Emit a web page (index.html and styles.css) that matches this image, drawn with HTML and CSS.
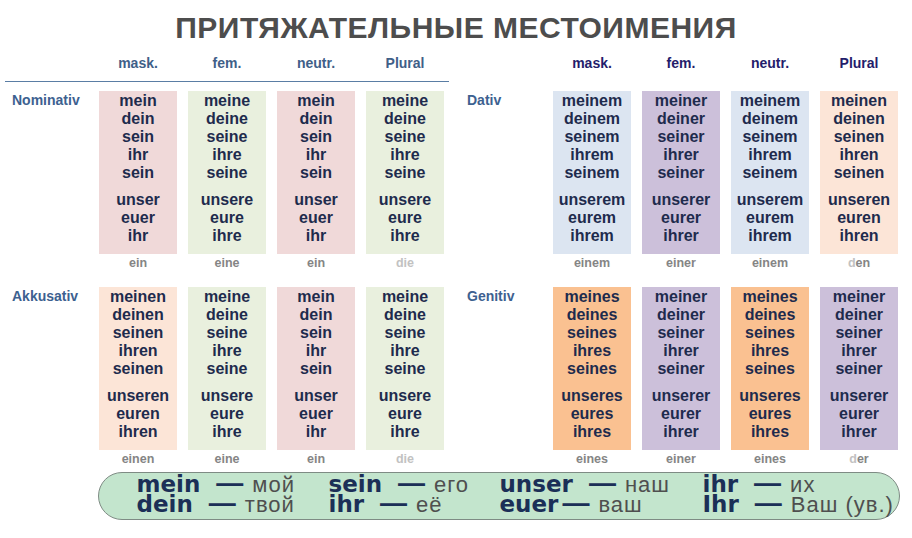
FILE: index.html
```html
<!DOCTYPE html>
<html lang="de">
<head>
<meta charset="utf-8">
<title>Притяжательные местоимения</title>
<link rel="stylesheet" href="styles.css">
</head>
<body>
<h1 class="title">ПРИТЯЖАТЕЛЬНЫЕ МЕСТОИМЕНИЯ</h1>
<div class="tables">
  <section class="panel panel-left">
    <div class="grid head"><span></span><span>mask.</span><span>fem.</span><span>neutr.</span><span>Plural</span></div>
    <div class="grid row">
      <div class="label">Nominativ</div>
      <div class="cell pink"><p>mein<br>dein<br>sein<br>ihr<br>sein</p><p>unser<br>euer<br>ihr</p></div>
      <div class="cell green"><p>meine<br>deine<br>seine<br>ihre<br>seine</p><p>unsere<br>eure<br>ihre</p></div>
      <div class="cell pink"><p>mein<br>dein<br>sein<br>ihr<br>sein</p><p>unser<br>euer<br>ihr</p></div>
      <div class="cell green"><p>meine<br>deine<br>seine<br>ihre<br>seine</p><p>unsere<br>eure<br>ihre</p></div>
    </div>
    <div class="grid arts"><span></span><span>ein</span><span>eine</span><span>ein</span><span class="lt">die</span></div>
    <div class="grid row row2">
      <div class="label">Akkusativ</div>
      <div class="cell peach"><p>meinen<br>deinen<br>seinen<br>ihren<br>seinen</p><p>unseren<br>euren<br>ihren</p></div>
      <div class="cell green"><p>meine<br>deine<br>seine<br>ihre<br>seine</p><p>unsere<br>eure<br>ihre</p></div>
      <div class="cell pink"><p>mein<br>dein<br>sein<br>ihr<br>sein</p><p>unser<br>euer<br>ihr</p></div>
      <div class="cell green"><p>meine<br>deine<br>seine<br>ihre<br>seine</p><p>unsere<br>eure<br>ihre</p></div>
    </div>
    <div class="grid arts"><span></span><span>einen</span><span>eine</span><span>ein</span><span class="lt">die</span></div>
  </section>
  <section class="panel panel-right">
    <div class="grid head"><span></span><span>mask.</span><span>fem.</span><span>neutr.</span><span>Plural</span></div>
    <div class="grid row">
      <div class="label">Dativ</div>
      <div class="cell blue"><p>meinem<br>deinem<br>seinem<br>ihrem<br>seinem</p><p>unserem<br>eurem<br>ihrem</p></div>
      <div class="cell lilac"><p>meiner<br>deiner<br>seiner<br>ihrer<br>seiner</p><p>unserer<br>eurer<br>ihrer</p></div>
      <div class="cell blue"><p>meinem<br>deinem<br>seinem<br>ihrem<br>seinem</p><p>unserem<br>eurem<br>ihrem</p></div>
      <div class="cell peach"><p>meinen<br>deinen<br>seinen<br>ihren<br>seinen</p><p>unseren<br>euren<br>ihren</p></div>
    </div>
    <div class="grid arts"><span></span><span>einem</span><span>einer</span><span>einem</span><span><span class="lt">d</span>en</span></div>
    <div class="grid row row2">
      <div class="label">Genitiv</div>
      <div class="cell orange"><p>meines<br>deines<br>seines<br>ihres<br>seines</p><p>unseres<br>eures<br>ihres</p></div>
      <div class="cell lilac"><p>meiner<br>deiner<br>seiner<br>ihrer<br>seiner</p><p>unserer<br>eurer<br>ihrer</p></div>
      <div class="cell orange"><p>meines<br>deines<br>seines<br>ihres<br>seines</p><p>unseres<br>eures<br>ihres</p></div>
      <div class="cell lilac"><p>meiner<br>deiner<br>seiner<br>ihrer<br>seiner</p><p>unserer<br>eurer<br>ihrer</p></div>
    </div>
    <div class="grid arts"><span></span><span>eines</span><span>einer</span><span>eines</span><span><span class="lt">d</span>er</span></div>
  </section>
</div>
<div class="legend">
  <div class="pair"><b class="de">mein</b><span class="dash">—</span><span class="ru">мой</span></div>
  <div class="pair"><b class="de">sein</b><span class="dash">—</span><span class="ru">его</span></div>
  <div class="pair"><b class="de">unser</b><span class="dash">—</span><span class="ru">наш</span></div>
  <div class="pair"><b class="de">ihr</b><span class="dash">—</span><span class="ru">их</span></div>
  <div class="pair"><b class="de">dein</b><span class="dash">—</span><span class="ru">твой</span></div>
  <div class="pair"><b class="de">ihr</b><span class="dash">—</span><span class="ru">её</span></div>
  <div class="pair"><b class="de tight">euer</b><span class="dash">—</span><span class="ru">ваш</span></div>
  <div class="pair"><b class="de">Ihr</b><span class="dash">—</span><span class="ru">Ваш (ув.)</span></div>
</div>
</body>
</html>
```
FILE: styles.css
```css
* { box-sizing: border-box; }

body {
  margin: 0;
  width: 912px;
  height: 538px;
  overflow: hidden;
  background: #ffffff;
  font-family: "Liberation Sans", Arial, sans-serif;
}

.title {
  margin: 0;
  height: 45px;
  padding-top: 11px;
  font-size: 30px;
  line-height: 34px;
  font-weight: 700;
  letter-spacing: 0.5px;
  color: #4d4d4d;
  text-align: center;
}

.tables { display: flex; }

.panel { display: flex; flex-direction: column; }
.panel-left { margin-left: 5px; width: 444px; }
.panel-right { margin-left: 18px; }

.grid {
  display: grid;
  column-gap: 11px;
  grid-template-columns: 76px repeat(4, 78px);
}
.panel-left .grid { padding-left: 7px; }
.panel-right .grid { grid-template-columns: 75px repeat(4, 78px); }

.head {
  height: 37px;
  padding-top: 9px;
  font-size: 14px;
  line-height: 18px;
  font-weight: 700;
  text-align: center;
  border-bottom: 1px solid transparent;
}
.panel-left .head { color: #3f6088; border-bottom-color: #5a7da4; }
.panel-right .head { color: #241d6b; }

.row { margin-top: 9px; }
.row2 { margin-top: 15px; }

.label {
  font-size: 14px;
  line-height: 18px;
  font-weight: 700;
  color: #3d6190;
}

.cell {
  height: 163px;
  padding: 1px 0 9px;
  font-size: 16px;
  line-height: 18px;
  font-weight: 700;
  color: #1e2b4d;
  text-align: center;
}
.cell p { margin: 0; }
.cell p + p { margin-top: 9px; }

.pink { background: #f0d9d9; }
.green { background: #e9f0de; }
.peach { background: #fce5d7; }
.blue { background: #dce5f1; }
.lilac { background: #ccc0da; }
.orange { background: #fac191; }

.arts {
  font-size: 12.5px;
  line-height: 18px;
  font-weight: 700;
  color: #858585;
  text-align: center;
}
.lt { color: #c2c2c2; }

.legend {
  margin: 4px 0 0 98px;
  width: 802px;
  height: 48px;
  padding: 0 0 0 37.5px;
  border: 1.5px solid #7e8b84;
  border-radius: 24px;
  background: #c3e5cd;
  display: grid;
  grid-template-columns: 192px 171px 203px auto;
  grid-template-rows: 20px 20px;
}

.pair {
  white-space: nowrap;
  line-height: 20px;
  height: 20px;
}

.de {
  font-family: "DejaVu Sans", Verdana, sans-serif;
  font-size: 23px;
  font-weight: 700;
  color: #1b2f57;
  margin-right: 16px;
}
.de.tight { margin-right: 4px; }

.dash {
  font-size: 27px;
  line-height: 20px;
  font-weight: 700;
  color: #1b2f57;
  margin-right: 9px;
}

.ru {
  font-size: 22px;
  letter-spacing: 1px;
  color: #4f4f4f;
}
```
